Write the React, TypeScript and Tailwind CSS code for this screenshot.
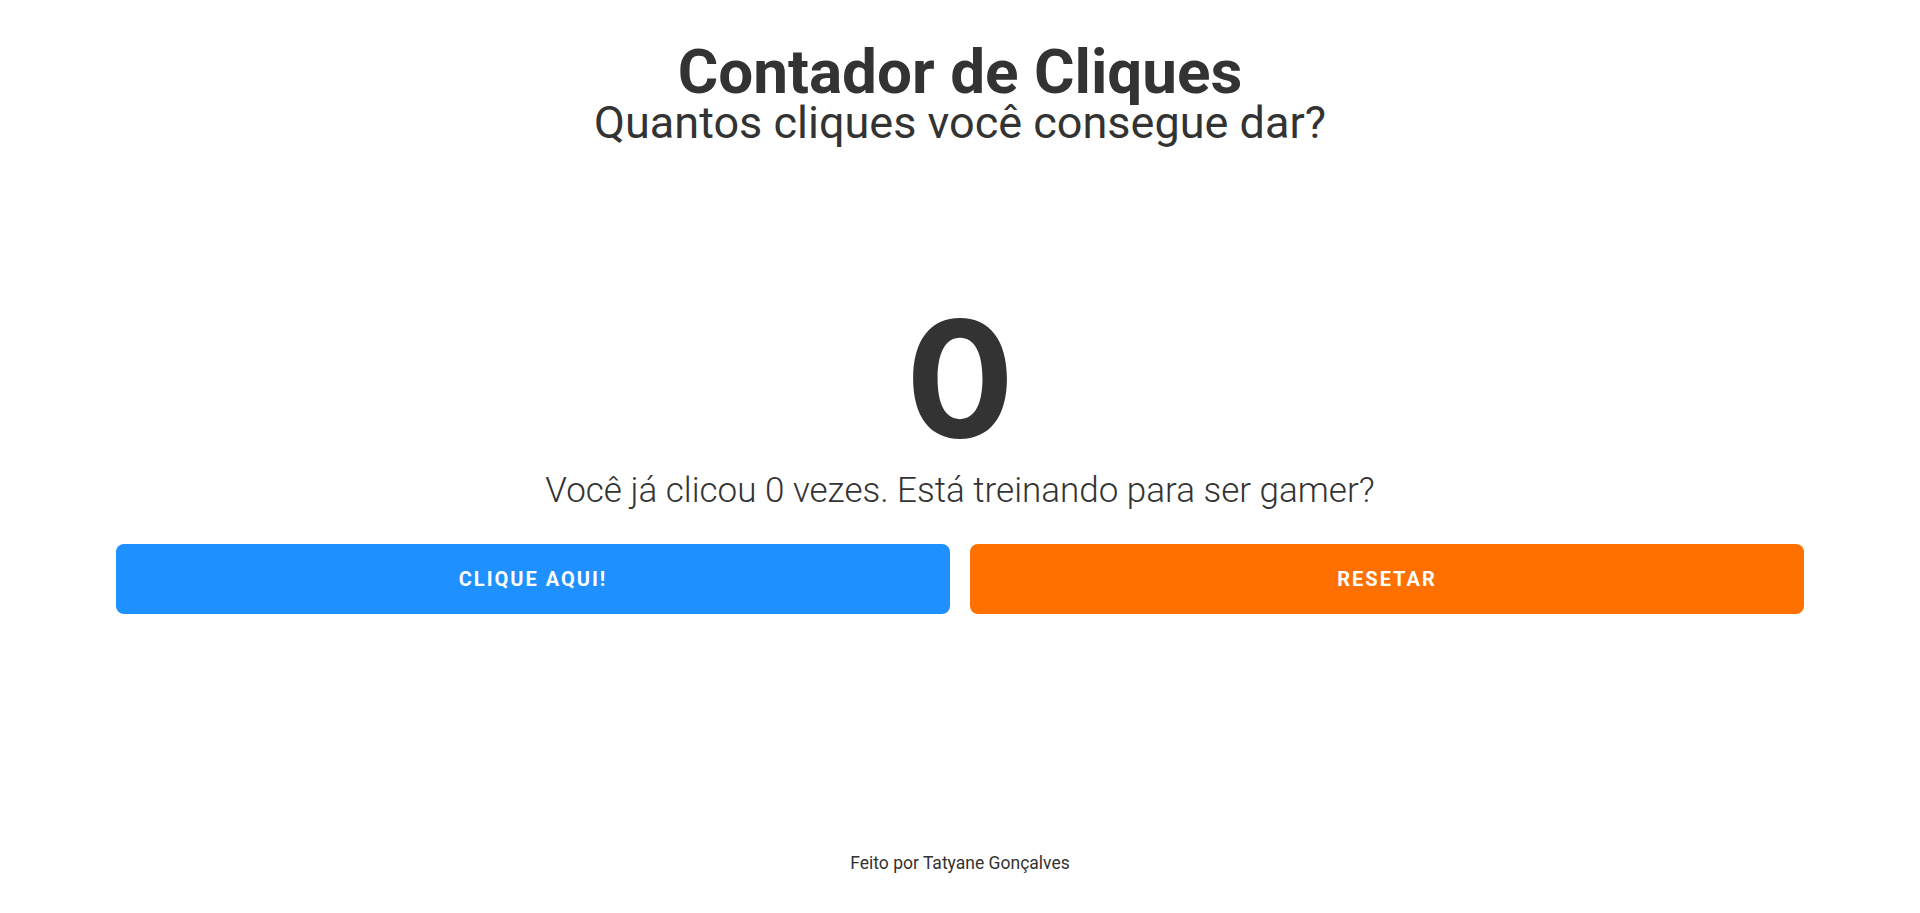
import React, { useState } from "react";

export default function App() {
  const [count, setCount] = useState(0);
  return (
    <div className="min-h-screen bg-white text-[#333333] font-['Roboto',sans-serif] flex flex-col items-center">
      <header className="flex flex-col items-center pt-[43px]">
        <h1 className="text-[62px] leading-[58px] font-bold">Contador de Cliques</h1>
        <h2 className="text-[45px] leading-[43px] font-normal">Quantos cliques você consegue dar?</h2>
      </header>
      <main className="w-[1688px] flex flex-col items-center mt-[154px]">
        <div className="font-['Inter',sans-serif] text-[161px] leading-[161px] font-bold">{count}</div>
        <p className="mt-[14px] text-[35px] leading-[35px] font-light">
          Você já clicou {count} vezes. Está treinando para ser gamer?
        </p>
        <div className="mt-[36px] w-full grid grid-cols-2 gap-[20px]">
          <button
            onClick={() => setCount(count + 1)}
            className="h-[70px] rounded-[8px] bg-[#1E90FF] text-white text-[20px] font-bold tracking-[2px] uppercase"
          >
            Clique aqui!
          </button>
          <button
            onClick={() => setCount(0)}
            className="h-[70px] rounded-[8px] bg-[#FF7000] text-white text-[20px] font-bold tracking-[2px] uppercase"
          >
            Resetar
          </button>
        </div>
      </main>
      <footer className="mt-[241px] text-[17.5px] leading-[17.5px]">Feito por Tatyane Gonçalves</footer>
    </div>
  );
}
